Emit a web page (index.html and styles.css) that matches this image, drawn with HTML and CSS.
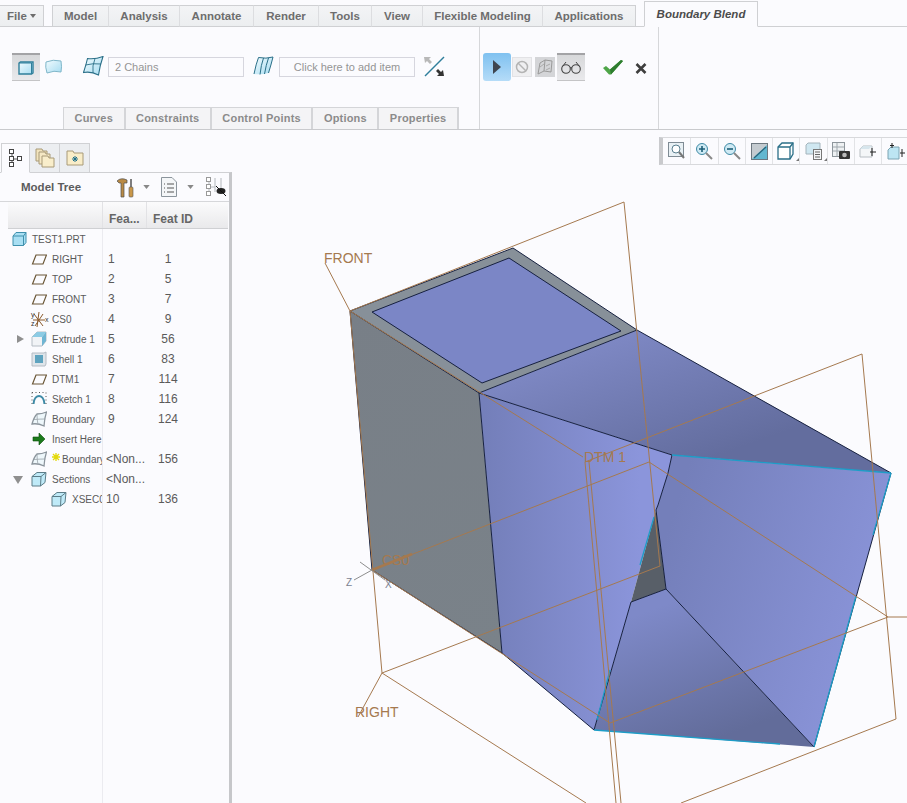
FILE: index.html
```html
<!DOCTYPE html>
<html lang="en">
<head>
<meta charset="utf-8">
<title>Boundary Blend</title>
<link rel="stylesheet" href="styles.css">
</head>
<body>
<svg class="defs" width="0" height="0" aria-hidden="true">
  <defs>
    <linearGradient id="g-ice" x1="0" y1="0" x2="1" y2="1"><stop offset="0" stop-color="#f2fbfe"/><stop offset="1" stop-color="#a6dcf1"/></linearGradient>
  </defs>
  <symbol id="i-plane" viewBox="0 0 16 16"><path d="M1.500 13 5 4H15.500L12 13Z" fill="none" stroke="#6a5636" stroke-width="1.200"/></symbol>
  <symbol id="i-part" viewBox="0 0 16 16"><path d="M2 5 5 1.500H15V11.500L12.500 14.500H2Z" fill="#a9dff3" stroke="#3f90ad"/><path d="M2 5H12.500V14.500M12.500 5 15 1.500" fill="none" stroke="#3f90ad"/></symbol>
  <symbol id="i-extrude" viewBox="0 0 16 16"><path d="M1 6 6 1H15V10L11 15H1Z" fill="#f1f3f6" stroke="#b5bcc4"/><path d="M1 6H11L15 1H6Z" fill="#8ccbe4"/><path d="M11 6 15 1V10L11 15Z" fill="#6fb5d3"/></symbol>
  <symbol id="i-shell" viewBox="0 0 16 16"><path d="M1 2H13L15 1V13L14 15H1Z" fill="#dfe5ea" stroke="#b5bcc4"/><rect x="4" y="4" width="8" height="8" fill="#5ea3bf"/></symbol>
  <symbol id="i-sketch" viewBox="0 0 16 16"><path d="M2.500 13C3 7 6 5 8 5S13 7 13.500 13" fill="none" stroke="#3d8aa6" stroke-width="2"/><path d="M1 1.500H15M1 1.500V15M15 1.500V15" fill="none" stroke="#555" stroke-dasharray="1 2.500"/></symbol>
  <symbol id="i-surface" viewBox="0 0 16 16"><path d="M1 13Q3 6 6 3 11 3 15.500 1 13.500 7 13 15 7 12 1 13Z" fill="#eef7fb" stroke="#8b949c" stroke-width="1.300"/><path d="M6 3Q6 9 7 13.500M3 8.500Q9 8 14.500 8" fill="none" stroke="#9aa3aa" stroke-width=".8"/></symbol>
  <symbol id="i-section" viewBox="0 0 16 16"><path d="M1 5.500 6 1.500H15L14 11.500 9.500 15H1Z" fill="#bfeaf8" stroke="#5c7d88"/><path d="M1 5.500H10L9.500 15M10 5.500 15 1.500" fill="none" stroke="#5c7d88"/></symbol>
  <symbol id="i-caret" viewBox="0 0 8 5"><path d="M0 0H8L4 5Z" fill="#888"/></symbol>
</svg>

<header class="top">
  <nav class="tabs">
    <div class="tab tab-file">File <span class="file-caret"></span></div>
    <div class="tab-group">
      <div class="tab">Model</div>
      <div class="tab">Analysis</div>
      <div class="tab">Annotate</div>
      <div class="tab">Render</div>
      <div class="tab">Tools</div>
      <div class="tab">View</div>
      <div class="tab">Flexible Modeling</div>
      <div class="tab">Applications</div>
    </div>
    <div class="tab tab-active">Boundary Blend</div>
  </nav>
  <section class="ribbon">
    <div class="rb-main">
      <div class="rb-row">
        <button class="tool tool-on">
          <svg width="16" height="14" viewBox="0 0 16 14"><path d="M1 2 2.500 1H15V12L13.500 13H1Z" fill="url(#g-ice)" stroke="#2f7f9b" stroke-width="1.400"/><path d="M1 2H13.500V13" fill="none" stroke="#2f7f9b"/></svg>
        </button>
        <span class="icon-surf">
          <svg width="18" height="16" viewBox="0 0 18 16"><path d="M1 3Q8 0 16 2 17 8 16 13 9 11 2 14 0 8 1 3Z" fill="url(#g-ice)" stroke="#7fb6c9"/></svg>
        </span>
        <span class="icon-chain">
          <svg width="21" height="20" viewBox="0 0 21 20"><path d="M4.500 2.500Q12 3.500 20 .5 17 9 15.500 19 8 15 .5 16.500 3 9 4.500 2.500Z" fill="url(#g-ice)" stroke="#2a6f88" stroke-width="1.100"/><path d="M2.500 9Q10 7 18 8M12 2.500Q9 10 10 17" fill="none" stroke="#2a6f88" stroke-width=".9"/></svg>
        </span>
        <div class="field">2 Chains</div>
        <span class="icon-chain2">
          <svg width="21" height="20" viewBox="0 0 21 20"><path d="M5.500 1.500Q13 3 20 1 18 9 15.500 17 8 19 1 18 3 8 5.500 1.500Z" fill="url(#g-ice)"/><path d="M5.500 1.500Q3 8 1 18M10.500 2Q8 9 7 18.500M15.500 2Q13 9 11.500 18M20 1Q18 9 15.500 17M5.500 1.500Q13 3 20 1" fill="none" stroke="#2a6f88"/></svg>
        </span>
        <div class="field field-center">Click here to add item</div>
        <span class="icon-flip">
          <svg width="21" height="21" viewBox="0 0 21 21"><path d="M1 20 20 1" stroke="#2f7f9b" stroke-width="1.500"/><path d="M0 1H7L5 3 8 6 6 8 3 5 1 7Z" fill="#b8b8b8"/><path d="M20 20H13L15 18 12 15 14 13 17 16 19 14Z" fill="#333"/></svg>
        </span>
      </div>
      <div class="subtabs">
        <div class="subtab">Curves</div>
        <div class="subtab">Constraints</div>
        <div class="subtab">Control Points</div>
        <div class="subtab">Options</div>
        <div class="subtab">Properties</div>
      </div>
    </div>
    <div class="rb-actions">
      <button class="tool tool-play">
        <svg width="10" height="16" viewBox="0 0 10 16"><path d="M1 1 9 8 1 15Z" fill="#3f4650"/></svg>
      </button>
      <button class="mini mini-stop">
        <svg width="14" height="14" viewBox="0 0 14 14"><circle cx="7" cy="7" r="5.500" fill="none" stroke="#b4b4b4" stroke-width="1.500"/><path d="M3 3 11 11" stroke="#b4b4b4" stroke-width="1.500"/></svg>
      </button>
      <button class="mini mini-hatch">
        <svg width="18" height="18" viewBox="0 0 18 18"><path d="M2 16 4 5 9 2 8 13ZM9 2 16 3 15 14 8 13" fill="none" stroke="#9a9a9a"/><path d="M4 9 8 6M10 8 14 6M10 12 14 10" stroke="#aaa"/></svg>
      </button>
      <button class="tool tool-on tool-glasses">
        <svg width="20" height="13" viewBox="0 0 20 13"><circle cx="5" cy="8" r="4.300" fill="none" stroke="#444" stroke-width="1.100"/><circle cx="15" cy="8" r="4.300" fill="none" stroke="#444" stroke-width="1.100"/><path d="M9 7Q10 6 11 7M1.500 5.500 5 1M18.500 5.500 15 1" fill="none" stroke="#444"/></svg>
      </button>
      <span class="ok">
        <svg width="20" height="15" viewBox="0 0 20 15"><path d="M0 8 3 6 7 9.500 18 0 20 1 8 14.500H6Z" fill="#4ea548"/><path d="M7 9.500 18 0 20 1 8 14.500Z" fill="#2e7d2f"/></svg>
      </span>
      <span class="cancel">
        <svg width="12" height="11" viewBox="0 0 12 11"><path d="M1.500 1 10.500 10M10.500 1 1.500 10" stroke="#3e3e3e" stroke-width="2.600"/></svg>
      </span>
    </div>
    <div class="rb-rest"></div>
  </section>
</header>

<main class="work">
  <aside class="side">
    <div class="side-tabs">
      <div class="stab stab-on">
        <svg width="14" height="18" viewBox="0 0 14 18"><path d="M3 5V15M3 10H9" stroke="#555"/><rect x=".5" y=".5" width="4" height="4" fill="#fff" stroke="#444"/><rect x=".5" y="7.500" width="4" height="4" fill="#fff" stroke="#444"/><rect x=".5" y="13.500" width="4" height="4" fill="#fff" stroke="#444"/><rect x="8.500" y="7.500" width="4" height="4" fill="#fff" stroke="#444"/></svg>
      </div>
      <div class="stab">
        <svg width="20" height="20" viewBox="0 0 20 20"><path d="M1 1H7L8 3H12V13H1Z" fill="#f2e4bd" stroke="#a89a78"/><path d="M4 4H10L11 6H15V16H4Z" fill="#f5e8c4" stroke="#a89a78"/><path d="M7 8H13L14 10H19V19H7Z" fill="#f9eecb" stroke="#a89a78"/></svg>
      </div>
      <div class="stab">
        <svg width="18" height="16" viewBox="0 0 18 16"><path d="M1 1H7L8 3H17V15H1Z" fill="#f9edc8" stroke="#a89a78"/><path d="M9 6V12M6 9H12M7 7 11 11M11 7 7 11" stroke="#1d6f8a"/></svg>
      </div>
    </div>
    <div class="panel">
      <div class="panel-head">
        <span class="panel-title">Model Tree</span>
        <svg class="ph-tools" width="18" height="20" viewBox="0 0 18 20"><path d="M0 3Q4-1 10 2V5H7V19H4V5H2Z" fill="#b98a45" stroke="#4d4d4d" stroke-width=".7"/><path d="M14 1V9" stroke="#555" stroke-width="1.500"/><rect x="12" y="9" width="4" height="10" rx="1" fill="#c9974a" stroke="#555" stroke-width=".6"/></svg>
        <svg class="ph-caret" width="7" height="4"><use href="#i-caret"/></svg>
        <svg class="ph-doc" width="16" height="20" viewBox="0 0 16 20"><path d="M.5.5H11L15.500 5V19.500H.5Z" fill="#f4f6f8" stroke="#8b949c"/><path d="M3 7H4M6 7H13M3 11H4M6 11H13M3 15H4M6 15H13" stroke="#555"/></svg>
        <svg class="ph-caret" width="7" height="4"><use href="#i-caret"/></svg>
        <svg class="ph-eye" width="21" height="20" viewBox="0 0 21 20"><path d="M3 5V17M3 10H9M9 1V15M15 1V12" stroke="#b4b8bd" fill="none"/><rect x=".5" y=".5" width="4" height="4" fill="#fff" stroke="#999"/><rect x=".5" y="7.500" width="4" height="4" fill="#fff" stroke="#999"/><rect x=".5" y="14.500" width="4" height="4" fill="#fff" stroke="#999"/><ellipse cx="15" cy="14" rx="4.500" ry="3" fill="#222"/><path d="M10 9 20 19" stroke="#111"/></svg>
      </div>
      <div class="tree">
        <div class="tree-head">
          <div class="th-blank"></div>
          <div class="th th-num">Fea...</div>
          <div class="th">Feat ID</div>
        </div>
        <div class="row"><div class="name lv0"><svg class="ico" width="16" height="16"><use href="#i-part"/></svg>TEST1.PRT</div><div class="num"></div><div class="fid"></div></div>
        <div class="row"><div class="name"><span class="twist"></span><svg class="ico" width="16" height="16"><use href="#i-plane"/></svg>RIGHT</div><div class="num">1</div><div class="fid">1</div></div>
        <div class="row"><div class="name"><span class="twist"></span><svg class="ico" width="16" height="16"><use href="#i-plane"/></svg>TOP</div><div class="num">2</div><div class="fid">5</div></div>
        <div class="row"><div class="name"><span class="twist"></span><svg class="ico" width="16" height="16"><use href="#i-plane"/></svg>FRONT</div><div class="num">3</div><div class="fid">7</div></div>
        <div class="row"><div class="name"><span class="twist"></span><svg class="ico ico-cs" width="16" height="16" viewBox="0 0 16 16"><path d="M3 3 12 15M4 15 12 3M8 1 6 16M2 9H14" stroke="#8a5a2c" fill="none"/><text class="csys-l" x="0" y="6">y</text><text class="csys-l" x="0" y="15">z</text><text class="csys-l" x="14" y="11">x</text></svg>CS0</div><div class="num">4</div><div class="fid">9</div></div>
        <div class="row"><div class="name"><span class="twist twist-r"></span><svg class="ico" width="16" height="16"><use href="#i-extrude"/></svg>Extrude 1</div><div class="num">5</div><div class="fid">56</div></div>
        <div class="row"><div class="name"><span class="twist"></span><svg class="ico" width="16" height="16"><use href="#i-shell"/></svg>Shell 1</div><div class="num">6</div><div class="fid">83</div></div>
        <div class="row"><div class="name"><span class="twist"></span><svg class="ico" width="16" height="16"><use href="#i-plane"/></svg>DTM1</div><div class="num">7</div><div class="fid">114</div></div>
        <div class="row"><div class="name"><span class="twist"></span><svg class="ico" width="16" height="16"><use href="#i-sketch"/></svg>Sketch 1</div><div class="num">8</div><div class="fid">116</div></div>
        <div class="row"><div class="name"><span class="twist"></span><svg class="ico" width="16" height="16"><use href="#i-surface"/></svg>Boundary</div><div class="num">9</div><div class="fid">124</div></div>
        <div class="row"><div class="name"><span class="twist"></span><svg class="ico" width="16" height="16" viewBox="0 0 16 16"><path d="M2 6H8V2L14 8 8 14V10H2Z" fill="#1c7a1c" stroke="#0c4f0c" stroke-width=".6"/></svg>Insert Here</div><div class="num"></div><div class="fid"></div></div>
        <div class="row"><div class="name"><span class="twist"></span><svg class="ico" width="16" height="16"><use href="#i-surface"/></svg><svg class="star" width="8" height="8" viewBox="0 0 8 8"><path d="M4 0V8M0 4H8M1 1 7 7M7 1 1 7" stroke="#e3d90a" stroke-width="1.300"/></svg>Boundary 2</div><div class="num num-none">&lt;Non...</div><div class="fid">156</div></div>
        <div class="row"><div class="name"><span class="twist twist-d"></span><svg class="ico" width="16" height="16"><use href="#i-section"/></svg>Sections</div><div class="num num-none">&lt;Non...</div><div class="fid"></div></div>
        <div class="row"><div class="name lv2"><svg class="ico" width="16" height="16"><use href="#i-section"/></svg>XSEC0001</div><div class="num num-tight">10</div><div class="fid">136</div></div>
      </div>
    </div>
  </aside>

  <div class="view">
    <svg class="scene" width="675" height="673" viewBox="232 130 675 673">
      <defs>
        <linearGradient id="g-top" gradientUnits="userSpaceOnUse" x1="600" y1="340" x2="650" y2="480"><stop offset="0" stop-color="#7e88c4"/><stop offset="1" stop-color="#636d9e"/></linearGradient>
        <linearGradient id="g-left" gradientUnits="userSpaceOnUse" x1="485" y1="520" x2="640" y2="520"><stop offset="0" stop-color="#747fba"/><stop offset="1" stop-color="#8b95db"/></linearGradient>
        <linearGradient id="g-right" gradientUnits="userSpaceOnUse" x1="665" y1="540" x2="860" y2="600"><stop offset="0" stop-color="#747fba"/><stop offset="1" stop-color="#8892d6"/></linearGradient>
        <linearGradient id="g-bottom" gradientUnits="userSpaceOnUse" x1="650" y1="610" x2="700" y2="745"><stop offset="0" stop-color="#7e89c8"/><stop offset="1" stop-color="#626c9a"/></linearGradient>
        <linearGradient id="g-grey" gradientUnits="userSpaceOnUse" x1="350" y1="311" x2="500" y2="650"><stop offset="0" stop-color="#787f87"/><stop offset="1" stop-color="#7a8289"/></linearGradient>
      </defs>

      <polygon points="350,311 479,393 502,653 372,570" fill="url(#g-grey)"/>
      <polygon points="479,393 637,330 891,473 672,455" fill="url(#g-top)"/>
      <polygon points="350,311 513,248 637,330 479,393" fill="#879099"/>
      <polygon points="372,312 509,258 621,331 482,383" fill="#7b86c6"/>
      <polygon points="479,393 672,455 668,473 658,505 656,510 631,602 594,730 502,653" fill="url(#g-left)"/>
      <polygon points="631,602 666,589 814,747 594,730" fill="url(#g-bottom)"/>
      <polygon points="672,455 891,473 814,747 666,589 656,510 658,505 668,473" fill="url(#g-right)"/>
      <polygon points="656,510 666,589 631,602" fill="#585f68"/>

      <g class="edge">
        <polyline points="350,311 513,248 637,330 891,473"/>
        <polyline points="350,311 479,393 637,330"/>
        <polygon points="372,312 509,258 621,331 482,383"/>
        <polyline points="350,311 372,570 502,653 594,730"/>
        <polyline points="479,393 502,653"/>
        <polyline points="479,393 672,455 668,473 658,505 656,510 666,589 631,602 594,730"/>
        <polyline points="666,589 814,747"/>
        <polyline points="891,473 814,747"/>
      </g>
      <g class="edge-hi">
        <line x1="672" y1="455" x2="891" y2="473"/>
        <line x1="594" y1="730" x2="780" y2="744"/>
        <line x1="891" y1="473" x2="873" y2="535"/>
        <line x1="856" y1="596" x2="814" y2="747"/>
        <line x1="654" y1="517" x2="640" y2="565"/>
        <line x1="610" y1="670" x2="597" y2="720"/>
      </g>

      <g class="datum">
        <polygon points="350,311 624,202 660,566 382,673"/>
        <line x1="325" y1="263" x2="350" y2="311"/>
        <line x1="358" y1="717" x2="382" y2="673"/>
        <line x1="382" y1="673" x2="586" y2="803"/>
        <line x1="350" y1="311" x2="583" y2="457"/>
        <line x1="372" y1="570" x2="610" y2="723"/>
        <line x1="862" y1="354" x2="585" y2="462"/>
        <line x1="862" y1="354" x2="896" y2="719"/>
        <line x1="896" y1="719" x2="681" y2="803"/>
        <line x1="888" y1="617" x2="907" y2="617"/>
        <line x1="888" y1="617" x2="610" y2="723"/>
        <line x1="649" y1="462" x2="888" y2="617"/>
        <line x1="649" y1="462" x2="372" y2="570"/>
        <line x1="585" y1="462" x2="616" y2="803"/>
        <line x1="589" y1="462" x2="621" y2="803"/>
        <line class="datum-thick" x1="372" y1="570" x2="412" y2="554"/>
      </g>
      <g class="csys-axes">
        <line x1="360" y1="562" x2="385" y2="580"/>
        <line x1="354" y1="580" x2="372" y2="570"/>
      </g>

      <text class="lbl" x="324" y="263">FRONT</text>
      <text class="lbl" x="355" y="717">RIGHT</text>
      <text class="lbl" x="584" y="462">DTM 1</text>
      <text class="lbl lbl-cs" x="382" y="565">CS0</text>
      <text class="lbl-axis" x="346" y="586">Z</text>
      <text class="lbl-axis" x="385" y="588">X</text>
    </svg>
    <div class="viewbar">
      <div class="vbar">
        <span class="vb"><svg width="18" height="18" viewBox="0 0 18 18"><rect x=".5" y=".5" width="15" height="14" fill="#e8f0f4" stroke="#7f8b94"/><circle cx="8" cy="7" r="4" fill="#fff" stroke="#5a7f90"/><path d="M11 10 16 16" stroke="#777" stroke-width="2"/></svg></span>
        <span class="vb"><svg width="18" height="18" viewBox="0 0 18 18"><circle cx="7" cy="7" r="5.500" fill="#cfeaf4" stroke="#3f8aa6"/><path d="M7 4V10M4 7H10" stroke="#1d5f78" stroke-width="1.600"/><path d="M11 11 17 17" stroke="#888" stroke-width="2"/></svg></span>
        <span class="vb"><svg width="18" height="18" viewBox="0 0 18 18"><circle cx="7" cy="7" r="5.500" fill="#cfeaf4" stroke="#3f8aa6"/><path d="M4 7H10" stroke="#1d5f78" stroke-width="1.600"/><path d="M11 11 17 17" stroke="#888" stroke-width="2"/></svg></span>
        <span class="vb"><svg width="17" height="17" viewBox="0 0 17 17"><rect width="17" height="17" fill="#c4cbd0"/><path d="M1 16 16 2V16Z" fill="#63b7d0"/><path d="M3 15 15 4" stroke="#26667c" stroke-width="1.300"/><rect x=".5" y=".5" width="16" height="16" fill="none" stroke="#6d7880"/></svg></span>
        <span class="vb"><svg class="vb-more" width="18" height="18" viewBox="0 0 18 18"><path d="M1 5 5 1H16V12L13 17H1Z" fill="#fff" stroke="#2a6f88" stroke-width="1.300"/><path d="M1 5H13V17M13 5 16 1" fill="none" stroke="#2a6f88" stroke-width="1.300"/><path d="M22 16V19H19Z" fill="#777"/></svg></span>
        <span class="vb"><svg class="vb-more" width="18" height="18" viewBox="0 0 18 18"><path d="M1 3 3 1H15V12H1Z" fill="#cfe7f1" stroke="#a4b4bc"/><rect x="8.500" y="7.500" width="8" height="10" fill="#f4f6f8" stroke="#777"/><path d="M10 10H15M10 12.500H15M10 15H15" stroke="#666"/><path d="M22 16V19H19Z" fill="#777"/></svg></span>
        <span class="vb"><svg width="18" height="18" viewBox="0 0 18 18"><rect x=".5" y=".5" width="12" height="14" fill="#eef1f3" stroke="#8e969c"/><path d="M1 5H12M1 9H12M5 1V14" stroke="#9fa7ad"/><rect x="7" y="9" width="11" height="8" rx="1" fill="#333"/><circle cx="12.500" cy="13" r="2.300" fill="#bbb"/></svg></span>
        <span class="vb"><svg width="18" height="18" viewBox="0 0 18 18"><path d="M1 7 4 4H13V15H1Z" fill="#f4f6f8" stroke="#b8bec3"/><path d="M4 4H13L10 7H1Z" fill="#d7e6ed"/><path d="M17 10H11M13 6V14" stroke="#222"/></svg></span>
        <span class="vb"><svg width="18" height="18" viewBox="0 0 18 18"><path d="M1 8 4 5H12V17H1Z" fill="#bde5f3" stroke="#7ca4b3"/><path d="M5 1V6M3 3.500H7M18 11H13M15 7V15" stroke="#222"/></svg></span>
      </div>
    </div>
  </div>
</main>
</body>
</html>
```

FILE: styles.css
```css
* { box-sizing: border-box; }
html, body { margin: 0; height: 100%; }
body {
  width: 907px;
  height: 803px;
  overflow: hidden;
  background: #fbfbfe;
  color: #555;
  font-family: "Liberation Sans", Arial, sans-serif;
  display: flex;
  flex-direction: column;
}
.defs { position: absolute; }
button { padding: 0; margin: 0; border: 0; background: none; font: inherit; }

/* ---------- top tabs ---------- */
.top { flex: none; height: 130px; display: flex; flex-direction: column; }
.tabs { height: 27px; display: flex; align-items: flex-end; border-bottom: 1px solid #cfd0d3; }
.tab {
  height: 22px;
  margin-bottom: -1px;
  display: flex;
  align-items: center;
  justify-content: center;
  font-size: 11.500px;
  font-weight: bold;
  color: #6d6d6d;
  background: linear-gradient(#f3f4f6, #eceef0);
  border-top: 1px solid #cfd0d3;
  border-bottom: 1px solid #cfd0d3;
  border-right: 1px solid #dcdde0;
  white-space: nowrap;
}
.tab-file {
  width: 44px;
  margin-right: 8px;
  border-right: 1px solid #cfd0d3;
  gap: 3px;
}
.file-caret { border: 3px solid transparent; border-top: 4px solid #6d6d6d; border-bottom: 0; }
.tab-group {
  display: grid;
  grid-template-columns: 56px 71px 74px 65px 53px 51px 120px 93px;
  border-left: 1px solid #cfd0d3;
}
.tab-group .tab:last-child { border-right-color: #cfd0d3; }
.tab-active {
  width: 114px;
  height: 26px;
  margin-left: 8px;
  font-style: italic;
  color: #4c4c4c;
  background: #fbfbfe;
  border: 1px solid #cfd0d3;
  border-bottom-color: #fbfbfe;
}

/* ---------- ribbon ---------- */
.ribbon { flex: 1; display: flex; border-bottom: 1px solid #c9cacd; }
.rb-main {
  width: 480px;
  display: flex;
  flex-direction: column;
  justify-content: space-between;
  border-right: 1px solid #d6d7da;
}
.rb-row { display: flex; align-items: center; height: 28px; margin-top: 26px; padding-left: 12px; }
.tool { width: 28px; height: 28px; display: flex; align-items: center; justify-content: center; flex: none; }
.tool-on { background: linear-gradient(#d7d8da, #e9e9ec); border-top: 2px solid #a3a3a6; border-bottom: 1px solid #c4c4c6; }
.icon-surf { margin-left: 5px; width: 18px; display: flex; }
.icon-chain { margin-left: 20px; width: 21px; margin-top: -2px; display: flex; }
.icon-chain2 { margin-left: 9px; width: 21px; margin-top: -2px; display: flex; }
.icon-flip { margin-left: 9px; width: 21px; margin-top: -1px; display: flex; }
.icon-chain + .field { margin-left: 4px; }
.icon-chain2 + .field { margin-left: 5px; }
.field {
  width: 136px;
  height: 20px;
  padding-left: 6px;
  display: flex;
  align-items: center;
  font-size: 11px;
  color: #959595;
  background: #fbfbfe;
  border: 1px solid #d6d6de;
}
.field-center { justify-content: center; padding-left: 0; }
.subtabs { display: flex; padding-left: 63px; }
.subtab {
  height: 22px;
  padding: 0 10.500px 2px;
  display: flex;
  align-items: center;
  font-size: 11px;
  font-weight: bold;
  letter-spacing: .2px;
  color: #8b8b8b;
  background: #f4f4f6;
  border: 1px solid #d4d5d8;
  border-bottom: 0;
  border-right-width: 2px;
}
.subtab + .subtab { border-left: 0; }

.rb-actions {
  width: 179px;
  height: 100%;
  padding: 26px 0 0 3px;
  display: flex;
  align-items: flex-start;
  border-right: 1px solid #d6d7da;
}
.tool-play { background: linear-gradient(#7fc1f0, #b5dcf8); border-radius: 3px; }
.mini { width: 20px; height: 20px; margin-top: 4px; display: flex; align-items: center; justify-content: center; flex: none; }
.mini-stop { margin-left: 1px; background: #efeff1; border: 1px solid #e2e2e5; }
.mini-hatch { margin-left: 3px; background: #d4d5d8; }
.tool-glasses { margin-left: 2px; }
.ok { margin: 7px 0 0 18px; display: flex; }
.cancel { margin: 10px 0 0 12px; display: flex; }
.rb-rest { flex: 1; }

/* ---------- work area ---------- */
.work { flex: 1; display: flex; min-height: 0; }
.side { width: 232px; flex: none; display: flex; flex-direction: column; padding-top: 13px; }
.side-tabs { height: 30px; display: flex; padding-left: 1px; margin-bottom: -1px; }
.stab {
  width: 30px;
  height: 30px;
  display: flex;
  align-items: center;
  justify-content: center;
  background: #eceef1;
  border: 1px solid #d0d1d4;
  border-left: 0;
  position: relative;
}
.stab-on { width: 29px; background: #fbfbfe; border-left: 1px solid #d0d1d4; border-bottom-color: #fbfbfe; z-index: 1; }
.panel {
  flex: 1;
  display: flex;
  flex-direction: column;
  border-top: 1px solid #cfd0d3;
  border-right: 3px solid #c6c7ca;
}
.panel-head {
  height: 29px;
  display: flex;
  align-items: center;
  border-bottom: 1px solid #d6d7da;
  flex: none;
}
.panel-title { width: 117px; padding-left: 21px; font-size: 11.500px; font-weight: bold; color: #5c5c5c; }
.ph-tools { margin-top: 1px; }
.ph-caret { margin-left: 8px; }
.ph-doc { margin-left: 11px; }
.ph-caret + .ph-eye { margin-left: 12px; }
.ph-doc + .ph-caret { margin-left: 10px; }

.tree {
  flex: 1;
  margin-left: 8px;
  margin-right: 1px;
  background: linear-gradient(#ebebf0, #ebebf0) 94px 0 / 1px 100% no-repeat;
}
.tree-head {
  height: 27px;
  display: grid;
  grid-template-columns: 94px 44px 1fr;
  background: linear-gradient(#fbfbfc, #e9e9eb);
  border-bottom: 1px solid #cfd0d3;
}
.th { display: flex; align-items: flex-end; padding: 0 0 2px 6px; font-size: 12px; font-weight: bold; color: #666; border-left: 1px solid #e2e2e5; }
.row { height: 20px; display: grid; grid-template-columns: 94px 44px 44px; align-items: center; }
.name {
  display: flex;
  align-items: center;
  height: 20px;
  overflow: hidden;
  white-space: nowrap;
  font-size: 10px;
  color: #5a5a5a;
}
.lv0 { padding-left: 3px; }
.lv2 { padding-left: 43px; }
.twist { width: 23px; flex: none; display: flex; justify-content: center; }
.twist-r::before { content: ""; margin-left: 1px; border: 4px solid transparent; border-left: 7px solid #8f8f8f; border-right: 0; }
.twist-d::before { content: ""; margin-top: 1px; border: 4px solid transparent; border-top: 8px solid #8f8f8f; border-bottom: 0; border-left-width: 5px; border-right-width: 5px; margin-left: -4px; }
.ico { flex: none; margin-right: 5px; }
.ico-cs { overflow: visible; }
.star { flex: none; margin: -4px 2px 0 0; }
.csys-l { font: 7px "Liberation Sans", Arial, sans-serif; fill: #333; }
.num { padding-left: 6px; font-size: 12px; color: #5a5a5a; white-space: nowrap; }
.num-none { padding-left: 4px; }
.num-tight { padding-left: 4px; }
.fid { text-align: center; font-size: 12px; color: #5a5a5a; }

/* ---------- graphics window ---------- */
.view { flex: 1; position: relative; min-width: 0; overflow: hidden; }
.scene { position: absolute; left: 0; top: 0; display: block; }
.viewbar { position: relative; display: flex; justify-content: flex-end; padding-top: 7px; }
.vbar {
  height: 28px;
  width: 248px;
  flex: none;
  display: flex;
  padding-left: 1px;
  background: #fbfbfe;
  border: 1px solid #d8d9dc;
  border-width: 1px 0;
  border-left: 4px solid #c9cacd;
  overflow: hidden;
}
.vb { width: 27.300px; flex: none; display: flex; align-items: center; justify-content: center; border-right: 1px solid #e2e3e6; }
.vb-more { overflow: visible; }

.edge polyline, .edge polygon { fill: none; stroke: #16203f; stroke-width: 1; }
.edge-hi line { stroke: #1d9dc7; stroke-width: 1.300; }
.datum polygon, .datum line { fill: none; stroke: #a5794f; stroke-width: 1; }
.datum .datum-thick { stroke-width: 2.500; }
.csys-axes line { stroke: #8d8d8d; stroke-width: 1; }
.lbl { font: 14px "Liberation Sans", Arial, sans-serif; fill: #a5794f; }
.lbl-axis { font: 10px "Liberation Sans", Arial, sans-serif; fill: #7a7f90; }
```
